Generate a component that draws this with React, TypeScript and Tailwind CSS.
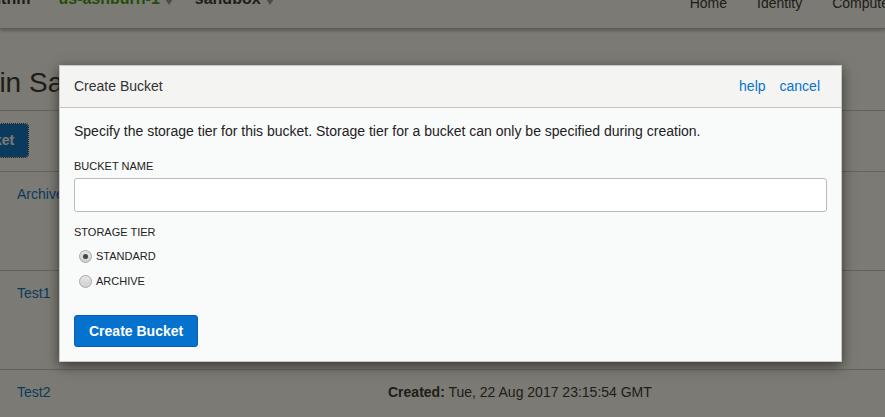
import React from 'react';

const rows = [
  { name: 'Archive', created: 'Tue, 22 Aug 2017 23:17:08 GMT' },
  { name: 'Test1', created: 'Tue, 22 Aug 2017 23:16:31 GMT' },
  { name: 'Test2', created: 'Tue, 22 Aug 2017 23:15:54 GMT' },
];

const Caret = () => (
  <svg width="8" height="6" viewBox="0 0 8 6" className="ml-[5px] mt-[6px] inline-block">
    <path d="M0 0 L8 0 L4 6 Z" fill="#999" />
  </svg>
);

const Radio = ({ checked }: { checked?: boolean }) => (
  <span className="ml-[5px] mr-[4px] flex h-[13px] w-[13px] items-center justify-center rounded-full border border-[#a8a8a8] bg-gradient-to-b from-[#e6e6e6] to-[#d0d0d0]">
    {checked && <span className="h-[5px] w-[5px] rounded-full bg-[#444]" />}
  </span>
);

const App: React.FC = () => {
  return (
    <div className="relative h-[417px] w-[885px] overflow-hidden bg-white font-['Liberation_Sans',Arial,sans-serif] text-[#333]">
      {/* Page behind the dialog */}
      <div className="-mt-[22px]">
        <header className="flex h-[51px] items-center justify-between border-b border-[#bbb] bg-white shadow-[0_2px_3px_rgba(0,0,0,0.25)]">
          <div className="-ml-[22px] mb-[9px] flex items-center text-[16px] font-bold">
            <span className="text-[#333]">ocitnm</span>
            <span className="ml-[28px] flex items-center text-[#3f9a16]">
              us-ashburn-1
              <Caret />
            </span>
            <span className="ml-[22px] flex items-center text-[#333]">
              sandbox
              <Caret />
            </span>
          </div>
          <nav className="-mr-[4px] flex items-center gap-[30px] text-[14px] text-[#333]">
            <span>Home</span>
            <span>Identity</span>
            <span>Compute</span>
          </nav>
        </header>

        <div className="px-[17px]">
          <h1 className="-ml-[125px] mt-[37px] whitespace-nowrap text-[28px] leading-[34px] text-[#333]">
            Buckets in Sandbox
          </h1>
          <div className="-mx-[17px] mt-[10px] border-t border-[#ccc]" />
          <button className="-ml-[111px] mt-[13px] h-[33px] whitespace-nowrap rounded-[3px] bg-[#0572ce] px-[14px] text-[14px] font-bold text-white outline-1 outline-dotted outline-[#333]">
            Create Bucket
          </button>
        </div>
        <div className="mt-[14px] border-t border-[#ccc]">
          {rows.map((r) => (
            <div key={r.name} className="flex h-[99px] border-b border-[#ccc] px-[17px] pt-[12px] text-[14px] leading-[20px]">
              <span className="w-[371px] text-[#0572ce]">{r.name}</span>
              <span>
                <b>Created:</b> {r.created}
              </span>
            </div>
          ))}
        </div>
      </div>

      {/* Overlay */}
      <div className="absolute inset-0 bg-[rgba(15,13,2,0.55)]" />

      {/* Dialog */}
      <div className="absolute left-[59px] top-[65px] w-[783px] border border-[#c8c8c8] bg-[#f9fafa] shadow-[0_4px_12px_rgba(0,0,0,0.55)]">
        <div className="flex h-[42px] items-center justify-between border-b border-[#c4c4c4] bg-[#f4f4f2] pl-[14px] pr-[21px] text-[14px]">
          <span className="text-[#333]">Create Bucket</span>
          <div className="flex gap-[14px] text-[#0572ce]">
            <span>help</span>
            <span>cancel</span>
          </div>
        </div>
        <div className="px-[14px] pb-[14px] pt-[13px]">
          <p className="text-[14px] leading-[20px] text-[#222]">
            Specify the storage tier for this bucket. Storage tier for a bucket can only be specified during creation.
          </p>
          <label className="mt-[17px] block text-[11px] leading-[16px] text-[#222]">BUCKET NAME</label>
          <input className="mt-[4px] block h-[34px] w-[753px] rounded-[3px] border border-[#bbb] bg-white px-2 text-[14px] outline-none" />
          <div className="mt-[12px] text-[11px] leading-[16px] text-[#222]">STORAGE TIER</div>
          <div className="mt-[4px]">
            <div className="flex h-[25px] items-center text-[11px] text-[#222]">
              <Radio checked />
              STANDARD
            </div>
            <div className="flex h-[25px] items-center text-[11px] text-[#222]">
              <Radio />
              ARCHIVE
            </div>
          </div>
          <button className="mt-[21px] h-[32px] rounded-[3px] border border-[#0a5cad] bg-[#0572ce] px-[14px] text-[14px] font-bold text-white">
            Create Bucket
          </button>
        </div>
      </div>
    </div>
  );
};

export default App;
